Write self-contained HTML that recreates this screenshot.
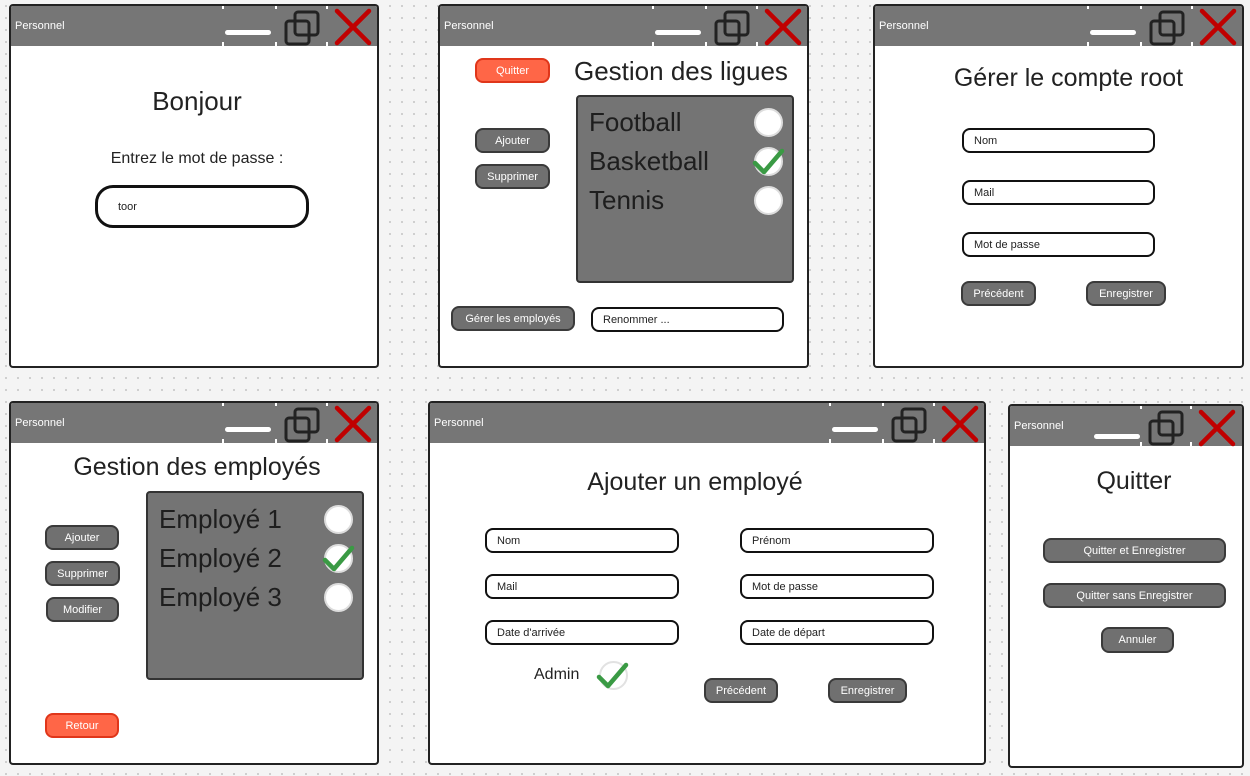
<!DOCTYPE html>
<html><head><meta charset="utf-8"><style>
*{box-sizing:border-box;margin:0;padding:0}
body{width:1250px;height:776px;position:relative;overflow:hidden;background:#f4f4f4;background-image:radial-gradient(#c8c8c8 0.8px,transparent 1.2px);background-size:12px 12px;font-family:"Liberation Sans",sans-serif}
.a{position:absolute}
.w{position:absolute;background:#fff;border:2px solid #222;border-radius:4px;overflow:hidden}
.tb{position:absolute;left:0;top:0;right:0;height:40px;background:#767676;color:#fff;font-size:11px;padding:14px 0 0 4px}
.dv{position:absolute;top:0;width:2px;height:40px;background:linear-gradient(#fff 0,#fff 3px,transparent 3px,transparent 36px,#fff 36px)}
.mn{position:absolute;height:5px;background:#fff;border-radius:3px}
.h{position:absolute;color:#222;text-align:center;font-size:25px;white-space:nowrap}
.b{position:absolute;background:#707070;border:2px solid #3a3a3a;border-radius:8px;color:#fff;font-size:11px;text-align:center;display:flex;align-items:center;justify-content:center}
.o{background:#ff6647;border-color:#e0361a}
.i{position:absolute;background:#fff;border:2.5px solid #111;border-radius:8px;font-size:11px;color:#222;display:flex;align-items:center;padding-left:10px}
.lb{position:absolute;background:#747474;border:2px solid #333;border-radius:4px}
.it{position:absolute;font-size:26px;color:#1e1e1e}
.c{position:absolute;width:29px;height:29px;border-radius:50%;background:#fff;border:2px solid #ddd}
</style></head><body>

<!-- W1 -->
<div class="w" style="left:9px;top:4px;width:370px;height:364px"><div class="tb">Personnel</div>
<div class="dv" style="left:211px"></div><div class="dv" style="left:264px"></div><div class="dv" style="left:315px"></div>
<div class="mn" style="left:214px;top:24px;width:46px"></div>
<svg class="a" style="left:272px;top:3px" width="38" height="38"><rect x="12" y="3" width="23" height="23" rx="3" fill="none" stroke="#222" stroke-width="3"/><rect x="3" y="12" width="23" height="23" rx="3" fill="none" stroke="#222" stroke-width="3"/></svg>
<svg class="a" style="left:322px;top:1px" width="40" height="40"><path d="M4 4L36 36M36 4L4 36" stroke="#c00000" stroke-width="4.5" stroke-linecap="round"/></svg>
</div>
<div class="h" style="left:9px;width:376px;top:86px;font-size:26px">Bonjour</div>
<div class="h" style="left:9px;width:376px;top:150px;font-size:16px">Entrez le mot de passe :</div>
<div class="i" style="left:95px;top:185px;width:214px;height:43px;border-radius:18px;padding-left:20px;border-width:3px">toor</div>

<!-- W2 -->
<div class="w" style="left:438px;top:4px;width:371px;height:364px"><div class="tb">Personnel</div>
<div class="dv" style="left:212px"></div><div class="dv" style="left:265px"></div><div class="dv" style="left:316px"></div>
<div class="mn" style="left:215px;top:24px;width:46px"></div>
<svg class="a" style="left:273px;top:3px" width="38" height="38"><rect x="12" y="3" width="23" height="23" rx="3" fill="none" stroke="#222" stroke-width="3"/><rect x="3" y="12" width="23" height="23" rx="3" fill="none" stroke="#222" stroke-width="3"/></svg>
<svg class="a" style="left:323px;top:1px" width="40" height="40"><path d="M4 4L36 36M36 4L4 36" stroke="#c00000" stroke-width="4.5" stroke-linecap="round"/></svg>
</div>
<div class="b o" style="left:475px;top:58px;width:75px;height:25px">Quitter</div>
<div class="h" style="left:574px;top:56px;font-size:26px">Gestion des ligues</div>
<div class="lb" style="left:576px;top:95px;width:218px;height:188px"></div>
<div class="it" style="left:589px;top:107px">Football</div>
<div class="it" style="left:589px;top:146px">Basketball</div>
<div class="it" style="left:589px;top:185px">Tennis</div>
<div class="c" style="left:754px;top:108px"></div><div class="c" style="left:754px;top:147px"></div><div class="c" style="left:754px;top:186px"></div>
<svg class="a" style="left:752px;top:146px" width="34" height="32"><path d="M3 17L12 26L30 5" fill="none" stroke="#3a9a44" stroke-width="4.5" stroke-linecap="round" stroke-linejoin="round"/></svg>
<div class="b" style="left:475px;top:128px;width:75px;height:25px">Ajouter</div>
<div class="b" style="left:475px;top:164px;width:75px;height:25px">Supprimer</div>
<div class="b" style="left:451px;top:306px;width:124px;height:25px">Gérer les employés</div>
<div class="i" style="left:591px;top:307px;width:193px;height:25px">Renommer ...</div>

<!-- W3 -->
<div class="w" style="left:873px;top:4px;width:371px;height:364px"><div class="tb">Personnel</div>
<div class="dv" style="left:212px"></div><div class="dv" style="left:265px"></div><div class="dv" style="left:316px"></div>
<div class="mn" style="left:215px;top:24px;width:46px"></div>
<svg class="a" style="left:273px;top:3px" width="38" height="38"><rect x="12" y="3" width="23" height="23" rx="3" fill="none" stroke="#222" stroke-width="3"/><rect x="3" y="12" width="23" height="23" rx="3" fill="none" stroke="#222" stroke-width="3"/></svg>
<svg class="a" style="left:323px;top:1px" width="40" height="40"><path d="M4 4L36 36M36 4L4 36" stroke="#c00000" stroke-width="4.5" stroke-linecap="round"/></svg>
</div>
<div class="h" style="left:873px;width:391px;top:64px;font-size:25px">Gérer le compte root</div>
<div class="i" style="left:962px;top:128px;width:193px;height:25px">Nom</div>
<div class="i" style="left:962px;top:180px;width:193px;height:25px">Mail</div>
<div class="i" style="left:962px;top:232px;width:193px;height:25px">Mot de passe</div>
<div class="b" style="left:961px;top:281px;width:75px;height:25px">Précédent</div>
<div class="b" style="left:1086px;top:281px;width:80px;height:25px">Enregistrer</div>

<!-- W4 -->
<div class="w" style="left:9px;top:401px;width:370px;height:364px"><div class="tb">Personnel</div>
<div class="dv" style="left:211px"></div><div class="dv" style="left:264px"></div><div class="dv" style="left:315px"></div>
<div class="mn" style="left:214px;top:24px;width:46px"></div>
<svg class="a" style="left:272px;top:3px" width="38" height="38"><rect x="12" y="3" width="23" height="23" rx="3" fill="none" stroke="#222" stroke-width="3"/><rect x="3" y="12" width="23" height="23" rx="3" fill="none" stroke="#222" stroke-width="3"/></svg>
<svg class="a" style="left:322px;top:1px" width="40" height="40"><path d="M4 4L36 36M36 4L4 36" stroke="#c00000" stroke-width="4.5" stroke-linecap="round"/></svg>
</div>
<div class="h" style="left:9px;width:376px;top:453px;font-size:25px">Gestion des employés</div>
<div class="lb" style="left:146px;top:491px;width:218px;height:189px"></div>
<div class="it" style="left:159px;top:504px">Employé 1</div>
<div class="it" style="left:159px;top:543px">Employé 2</div>
<div class="it" style="left:159px;top:582px">Employé 3</div>
<div class="c" style="left:324px;top:505px"></div><div class="c" style="left:324px;top:544px"></div><div class="c" style="left:324px;top:583px"></div>
<svg class="a" style="left:322px;top:543px" width="34" height="32"><path d="M3 17L12 26L30 5" fill="none" stroke="#3a9a44" stroke-width="4.5" stroke-linecap="round" stroke-linejoin="round"/></svg>
<div class="b" style="left:45px;top:525px;width:74px;height:25px">Ajouter</div>
<div class="b" style="left:45px;top:561px;width:75px;height:25px">Supprimer</div>
<div class="b" style="left:46px;top:597px;width:73px;height:25px">Modifier</div>
<div class="b o" style="left:45px;top:713px;width:74px;height:25px">Retour</div>

<!-- W5 -->
<div class="w" style="left:428px;top:401px;width:558px;height:364px"><div class="tb">Personnel</div>
<div class="dv" style="left:399px"></div><div class="dv" style="left:452px"></div><div class="dv" style="left:503px"></div>
<div class="mn" style="left:402px;top:24px;width:46px"></div>
<svg class="a" style="left:460px;top:3px" width="38" height="38"><rect x="12" y="3" width="23" height="23" rx="3" fill="none" stroke="#222" stroke-width="3"/><rect x="3" y="12" width="23" height="23" rx="3" fill="none" stroke="#222" stroke-width="3"/></svg>
<svg class="a" style="left:510px;top:1px" width="40" height="40"><path d="M4 4L36 36M36 4L4 36" stroke="#c00000" stroke-width="4.5" stroke-linecap="round"/></svg>
</div>
<div class="h" style="left:428px;width:534px;top:468px;font-size:25px">Ajouter un employé</div>
<div class="i" style="left:485px;top:528px;width:194px;height:25px">Nom</div>
<div class="i" style="left:740px;top:528px;width:194px;height:25px">Prénom</div>
<div class="i" style="left:485px;top:574px;width:194px;height:25px">Mail</div>
<div class="i" style="left:740px;top:574px;width:194px;height:25px">Mot de passe</div>
<div class="i" style="left:485px;top:620px;width:194px;height:25px">Date d'arrivée</div>
<div class="i" style="left:740px;top:620px;width:194px;height:25px">Date de départ</div>
<div class="a" style="left:534px;top:666px;font-size:16px;color:#222">Admin</div>
<div class="c" style="left:599px;top:661px;border-color:#e2e2e2"></div>
<svg class="a" style="left:596px;top:660px" width="34" height="32"><path d="M3 17L12 26L30 5" fill="none" stroke="#3a9a44" stroke-width="4.5" stroke-linecap="round" stroke-linejoin="round"/></svg>
<div class="b" style="left:704px;top:678px;width:74px;height:25px">Précédent</div>
<div class="b" style="left:828px;top:678px;width:79px;height:25px">Enregistrer</div>

<!-- W6 -->
<div class="w" style="left:1008px;top:404px;width:236px;height:364px"><div class="tb">Personnel</div>
<div class="dv" style="left:130px"></div><div class="dv" style="left:180px"></div>
<div class="mn" style="left:84px;top:28px;width:46px"></div>
<svg class="a" style="left:137px;top:3px" width="38" height="38"><rect x="12" y="3" width="23" height="23" rx="3" fill="none" stroke="#222" stroke-width="3"/><rect x="3" y="12" width="23" height="23" rx="3" fill="none" stroke="#222" stroke-width="3"/></svg>
<svg class="a" style="left:187px;top:2px" width="40" height="40"><path d="M4 4L36 36M36 4L4 36" stroke="#c00000" stroke-width="4.5" stroke-linecap="round"/></svg>
</div>
<div class="h" style="left:1008px;width:252px;top:467px;font-size:25px">Quitter</div>
<div class="b" style="left:1043px;top:538px;width:183px;height:25px">Quitter et Enregistrer</div>
<div class="b" style="left:1043px;top:583px;width:183px;height:25px">Quitter sans Enregistrer</div>
<div class="b" style="left:1101px;top:627px;width:73px;height:26px">Annuler</div>
</body></html>
